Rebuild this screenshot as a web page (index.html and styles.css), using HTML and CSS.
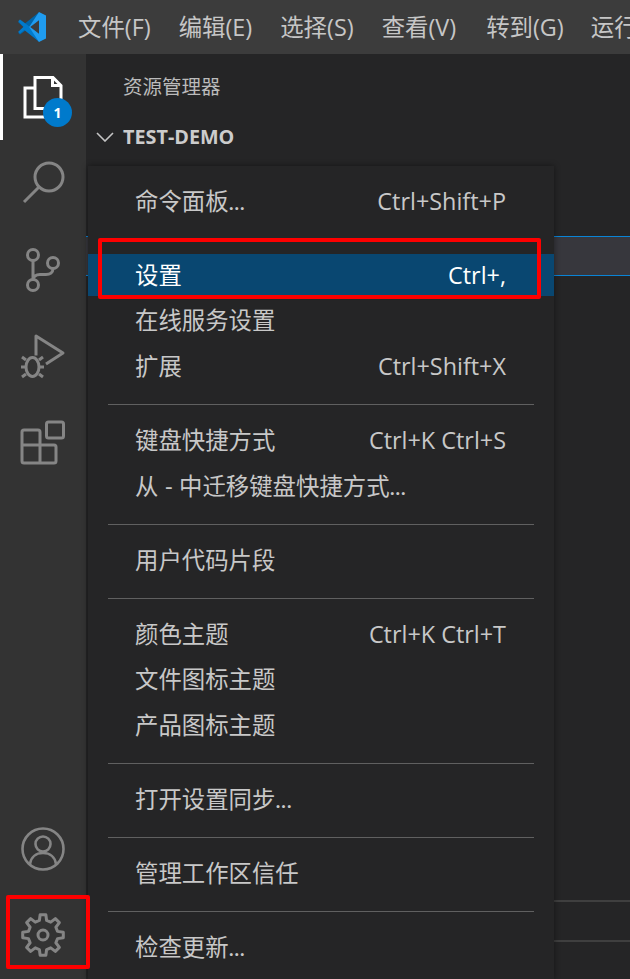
FILE: index.html
```html
<!DOCTYPE html>
<html lang="zh-CN">
<head>
<meta charset="utf-8">
<title>VS Code</title>
<link rel="stylesheet" href="styles.css">
</head>
<body>
<div class="app">
  <header class="titlebar">
    <svg class="logo" viewBox="0 0 30 30" width="30" height="30">
      <path fill="#0065a9" d="M1.2 10.2 3 8.6l4.3 3.3L22 0.3v8L7.4 19.2l-4.4 3.2-1.8-1.6L6.6 15.3z"/>
      <path fill="#007acc" d="M1.2 19.8 3 21.4l4.3-3.3L22 29.7v-8L7.4 10.8 3 7.6 1.2 9.2 6.6 14.7z"/>
      <path fill="#1f9cf0" d="M22 0 29 3.4v23.2L22 30 12.2 15z"/>
      <path fill="#3c3c3c" d="M22 8.3v13.4L13.2 15z"/>
    </svg>
    <nav class="menubar">
      <span>文件(F)</span><span>编辑(E)</span><span>选择(S)</span><span>查看(V)</span><span>转到(G)</span><span>运行(R)</span>
    </nav>
  </header>
  <div class="workbench">
    <aside class="activity">
      <div class="activity-top">
        <div class="act act-active">
          <svg viewBox="0 0 86 86" width="86" height="86" class="icon-white">
            <path d="M35 34H25v29h26V53"/>
            <path d="M35 23.500h18l8 8v23H35z"/>
            <path d="M52.500 23.500v8h8"/>
          </svg>
          <span class="badge">1</span>
        </div>
        <div class="act">
          <svg viewBox="0 0 86 86" width="86" height="86" class="icon">
            <circle cx="49" cy="37" r="14"/>
            <path d="M39 47 24 62"/>
          </svg>
        </div>
        <div class="act">
          <svg viewBox="0 0 86 86" width="86" height="86" class="icon">
            <circle cx="33" cy="29" r="5.500"/>
            <circle cx="53" cy="37" r="5.500"/>
            <circle cx="33" cy="59" r="5.500"/>
            <path d="M33 34.500v19M53 42.500c0 4-3 6-7 6H40c-4 0-7 2-7 6"/>
          </svg>
        </div>
        <div class="act">
          <svg viewBox="0 0 86 86" width="86" height="86" class="icon">
            <path d="M36 43.500V24l27 17-17 11"/>
            <ellipse cx="32.500" cy="55" rx="6.500" ry="9.500"/>
            <path d="M26 48l-4-3M39 48l4-3M26 55h-5M39 55h5M26 62l-4 3M39 62l4 3"/>
          </svg>
        </div>
        <div class="act">
          <svg viewBox="0 0 86 86" width="86" height="86" class="icon">
            <rect x="46.500" y="24" width="17" height="16" rx="2"/>
            <path d="M24 32h14a2 2 0 0 1 2 2v31H24a2 2 0 0 1-2-2V34a2 2 0 0 1 2-2zM22 47h32a2 2 0 0 1 2 2v14a2 2 0 0 1-2 2H40"/>
          </svg>
        </div>
      </div>
      <div class="activity-bottom">
        <div class="act-small">
          <svg viewBox="0 0 86 86" width="86" height="86" class="icon icon-thin">
            <circle cx="43" cy="43" r="20.500"/>
            <circle cx="43" cy="38" r="7.500"/>
            <path d="M30 58c1-7 6-11 13-11s12 4 13 11"/>
          </svg>
        </div>
        <div class="act-small">
          <svg viewBox="-43 -43 86 86" width="86" height="86" class="icon icon-gear">
            <polygon points="14.550,-3.630 20.300,-2.850 20.300,2.850 14.550,3.630 12.850,7.720 16.370,12.340 12.340,16.370 7.720,12.850 3.630,14.550 2.850,20.300 -2.850,20.300 -3.630,14.550 -7.720,12.850 -12.340,16.370 -16.370,12.340 -12.850,7.720 -14.550,3.630 -20.300,2.850 -20.300,-2.850 -14.550,-3.630 -12.850,-7.720 -16.370,-12.340 -12.340,-16.370 -7.720,-12.850 -3.630,-14.550 -2.850,-20.300 2.850,-20.300 3.630,-14.550 7.720,-12.850 12.340,-16.370 16.370,-12.340 12.850,-7.720"/>
            <circle cx="0" cy="0" r="5"/>
          </svg>
        </div>
      </div>
    </aside>
    <section class="sidebar">
      <div class="side-title">资源管理器</div>
      <div class="side-section">
        <svg class="chevron" viewBox="0 0 18 10" width="18" height="10"><path d="M1 1l8 8 8-8"/></svg>
        <span>TEST-DEMO</span>
      </div>
      <div class="side-selected"></div>
      <div class="side-spacer"></div>
      <div class="side-rule"></div>
      <div class="side-gap"></div>
      <div class="side-rule"></div>
    </section>
  </div>

  <div class="menu">
    <div class="item"><span>命令面板...</span><kbd>Ctrl+Shift+P</kbd></div>
    <div class="sep"></div>
    <div class="item item-on"><span>设置</span><kbd>Ctrl+,</kbd></div>
    <div class="item"><span>在线服务设置</span></div>
    <div class="item"><span>扩展</span><kbd>Ctrl+Shift+X</kbd></div>
    <div class="sep"></div>
    <div class="item"><span>键盘快捷方式</span><kbd>Ctrl+K Ctrl+S</kbd></div>
    <div class="item"><span>从 - 中迁移键盘快捷方式...</span></div>
    <div class="sep"></div>
    <div class="item"><span>用户代码片段</span></div>
    <div class="sep"></div>
    <div class="item"><span>颜色主题</span><kbd>Ctrl+K Ctrl+T</kbd></div>
    <div class="item"><span>文件图标主题</span></div>
    <div class="item"><span>产品图标主题</span></div>
    <div class="sep"></div>
    <div class="item"><span>打开设置同步...</span></div>
    <div class="sep"></div>
    <div class="item"><span>管理工作区信任</span></div>
    <div class="sep"></div>
    <div class="item"><span>检查更新...</span></div>
  </div>

  <div class="mark mark-settings"></div>
  <div class="mark mark-gear"></div>
</div>
</body>
</html>
```

FILE: styles.css
```css
* { box-sizing: border-box; }
html, body { margin: 0; height: 100%; overflow: hidden; background: #252526; }
body { font-family: "Noto Sans CJK SC", "Open Sans", sans-serif; }

.app { position: relative; width: 630px; height: 979px; overflow: hidden; display: flex; flex-direction: column; }

.titlebar { height: 54px; flex: none; background: #3c3c3c; display: flex; align-items: center; padding-left: 17px; }
.logo { flex: none; }
.menubar { display: flex; gap: 28px; margin-left: 31px; color: #c6c6c6; font-size: 23.4px; white-space: nowrap; font-family: "Open Sans", "Noto Sans CJK SC", sans-serif; line-height: 54px; }
.menubar span:nth-child(5) { margin-left: 2px; }
.menubar span:last-child { margin-left: -1px; }

.workbench { flex: 1; display: flex; min-height: 0; }

.activity { width: 86px; flex: none; background: #333333; display: flex; flex-direction: column; justify-content: space-between; }
.act { position: relative; height: 86px; }
.act svg, .act-small svg { display: block; }
.act-active { box-shadow: inset 3px 0 0 #ffffff; }
.act-small { height: 86px; }
.activity-bottom { margin-bottom: 1px; }

.icon, .icon-white { fill: none; stroke: #858585; stroke-width: 3; stroke-linejoin: round; }
.icon-white { stroke: #ffffff; stroke-linejoin: miter; }
.icon-thin { stroke-width: 2.6; }

.badge { position: absolute; left: 43px; top: 44px; width: 29px; height: 29px; border-radius: 50%; background: #007acc; color: #fff; font: 700 14px/29px "Open Sans", sans-serif; text-align: center; }

.sidebar { flex: 1; min-width: 0; background: #252526; display: flex; flex-direction: column; }
.side-title { height: 66px; padding-left: 37px; font-size: 19.500px; line-height: 64px; color: #bbbbbb; }
.side-section { height: 34px; padding-left: 10px; display: flex; align-items: center; gap: 9px; color: #cccccc; font: 700 19.800px/34px "Open Sans", sans-serif; }
.chevron { fill: none; stroke: #c5c5c5; stroke-width: 1.600; flex: none; }
.side-selected { margin-top: 82px; height: 40px; background: #37373d; border-top: 1px solid #0a84d6; border-bottom: 1px solid #0a84d6; }
.side-spacer { height: 624px; }
.side-rule { height: 2px; background: #3f3f3f; }
.side-gap { height: 38px; }

.menu { position: absolute; left: 88px; top: 166px; bottom: 0; width: 466px; background: #252526; box-shadow: 0 0 6px rgba(0,0,0,.45); padding-top: 12px; color: #c8c8c8; font-size: 23.4px; font-family: "Lato", "Noto Sans CJK SC", sans-serif; display: flex; flex-direction: column; }
.item { height: 42px; flex: none; margin: 1.800px 0; padding: 0 48px 0 47px; display: flex; align-items: center; justify-content: space-between; white-space: nowrap; line-height: 42px; }
.item-on { background: #094771; color: #ffffff; }
.item kbd { font: 400 23.4px/42px "Open Sans", sans-serif; }
.sep { height: 28.400px; flex: none; margin: 0 20px; padding-top: 3.500px; display: flex; align-items: center; }
.sep::before { content: ""; display: block; width: 100%; height: 1px; background: #606060; }

.mark { position: absolute; border: 4px solid #fe0000; border-radius: 2px; }
.mark-settings { left: 98px; top: 238px; width: 443px; height: 61px; }
.mark-gear { left: 6px; top: 895px; width: 84px; height: 74px; }
```
